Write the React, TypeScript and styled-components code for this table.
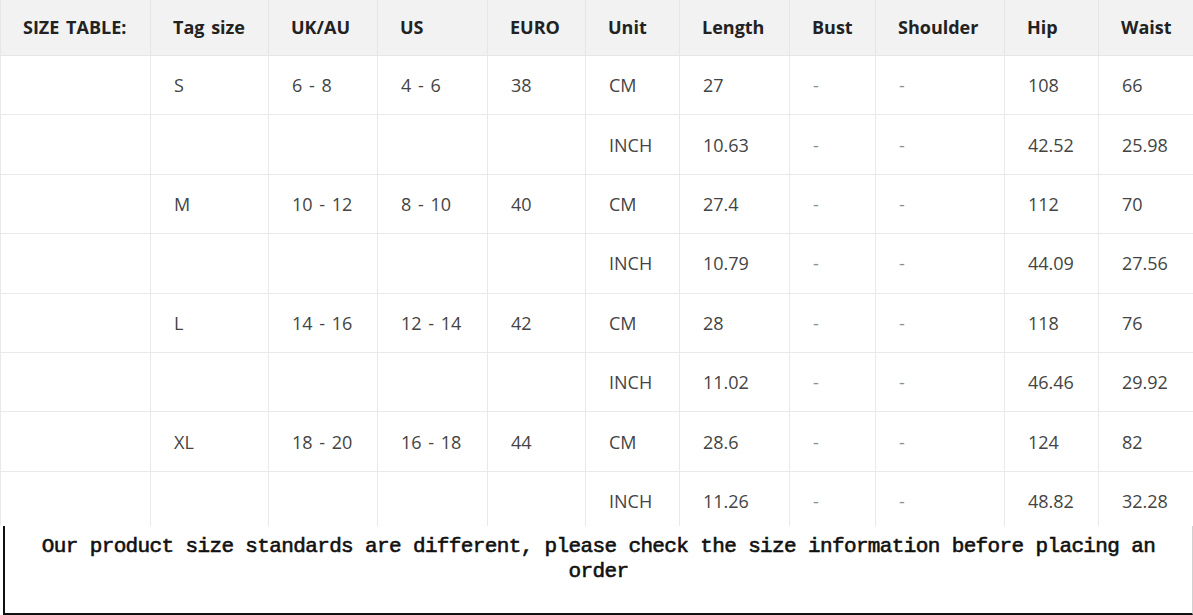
import React from 'react';
import styled, { createGlobalStyle } from 'styled-components';

const GlobalStyle = createGlobalStyle`
  html, body {
    margin: 0;
    padding: 0;
    background: #ffffff;
  }
  body {
    width: 1193px;
    height: 615px;
    overflow: hidden;
  }
`;

const Page = styled.div`
  display: flex;
  flex-direction: column;
  width: 1193px;
  height: 615px;
`;

const TableViewport = styled.div`
  height: 526px;
  overflow: hidden;
  flex-shrink: 0;
`;

const SizeTable = styled.table`
  border-collapse: collapse;
  table-layout: fixed;
  width: 1193px;
  font-family: 'Open Sans', 'Noto Sans', sans-serif;
  font-size: 18px;
  word-spacing: 2px;
`;

const HeadCell = styled.th`
  background-color: #f2f2f2;
  border: 1px solid #e6e6e6;
  border-top: none;
  color: #222;
  font-weight: 700;
  height: 53px;
  padding: 0 0 2px 22px;
  text-align: left;
  white-space: nowrap;
`;

const BodyCell = styled.td<{ $muted?: boolean }>`
  border: 1px solid #e9e9e9;
  color: ${(props) => (props.$muted ? '#8e8e8e' : '#444')};
  height: 58.4px;
  padding: 0 0 0 23px;
  text-align: left;
  white-space: nowrap;
`;

const Note = styled.div`
  flex: 1;
  margin-left: 3px;
  border-left: 2px solid #111;
  border-bottom: 2px solid #111;
  border-right: 1px solid #d0d0d0;
  padding: 8px 20px 0;
  font-family: 'Liberation Mono', 'DejaVu Sans Mono', monospace;
  font-weight: 400;
  -webkit-text-stroke: 0.6px #111;
  font-size: 21px;
  letter-spacing: -0.63px;
  line-height: 25px;
  color: #111;
  text-align: center;
`;

const columns = [
  { label: 'SIZE TABLE:', width: 150 },
  { label: 'Tag size', width: 118 },
  { label: 'UK/AU', width: 109 },
  { label: 'US', width: 110 },
  { label: 'EURO', width: 98 },
  { label: 'Unit', width: 94 },
  { label: 'Length', width: 110 },
  { label: 'Bust', width: 86 },
  { label: 'Shoulder', width: 129 },
  { label: 'Hip', width: 94 },
  { label: 'Waist', width: 95 },
];

const sizes = [
  { tag: 'S', uk: '6 - 8', us: '4 - 6', euro: '38', cm: ['27', '108', '66'], inch: ['10.63', '42.52', '25.98'] },
  { tag: 'M', uk: '10 - 12', us: '8 - 10', euro: '40', cm: ['27.4', '112', '70'], inch: ['10.79', '44.09', '27.56'] },
  { tag: 'L', uk: '14 - 16', us: '12 - 14', euro: '42', cm: ['28', '118', '76'], inch: ['11.02', '46.46', '29.92'] },
  { tag: 'XL', uk: '18 - 20', us: '16 - 18', euro: '44', cm: ['28.6', '124', '82'], inch: ['11.26', '48.82', '32.28'] },
];

const rows = sizes.flatMap((s) => [
  [s.tag, s.uk, s.us, s.euro, 'CM', s.cm[0], s.cm[1], s.cm[2]],
  ['', '', '', '', 'INCH', s.inch[0], s.inch[1], s.inch[2]],
]);

export default function App() {
  return (
    <Page>
      <GlobalStyle />
      <TableViewport>
        <SizeTable>
          <colgroup>
            {columns.map((c) => (
              <col key={c.label} style={{ width: c.width }} />
            ))}
          </colgroup>
          <thead>
            <tr>
              {columns.map((c) => (
                <HeadCell key={c.label}>{c.label}</HeadCell>
              ))}
            </tr>
          </thead>
          <tbody>
            {rows.map(([tag, uk, us, euro, unit, length, hip, waist], i) => (
              <tr key={i}>
                <BodyCell />
                <BodyCell>{tag}</BodyCell>
                <BodyCell>{uk}</BodyCell>
                <BodyCell>{us}</BodyCell>
                <BodyCell>{euro}</BodyCell>
                <BodyCell>{unit}</BodyCell>
                <BodyCell>{length}</BodyCell>
                <BodyCell $muted>-</BodyCell>
                <BodyCell $muted>-</BodyCell>
                <BodyCell>{hip}</BodyCell>
                <BodyCell>{waist}</BodyCell>
              </tr>
            ))}
          </tbody>
        </SizeTable>
      </TableViewport>
      <Note>
        Our product size standards are different, please check the size information before placing an order
      </Note>
    </Page>
  );
}
